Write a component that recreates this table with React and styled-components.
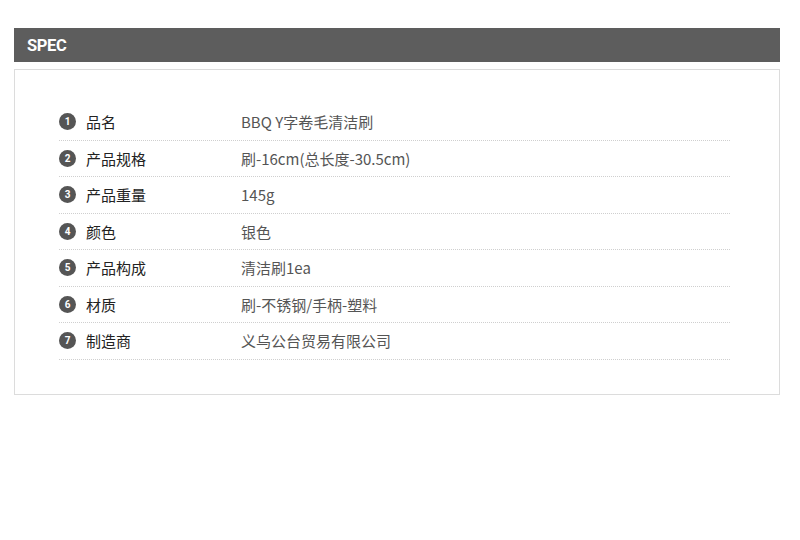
import React from "react";
import styled, { createGlobalStyle } from "styled-components";

const specs = [
    { label: "品名", value: "BBQ Y字卷毛清洁刷" },
    { label: "产品规格", value: "刷-16cm(总长度-30.5cm)" },
    { label: "产品重量", value: "145g" },
    { label: "颜色", value: "银色" },
    { label: "产品构成", value: "清洁刷1ea" },
    { label: "材质", value: "刷-不锈钢/手柄-塑料" },
    { label: "制造商", value: "义乌公台贸易有限公司" },
];

function App() {
    return (
        <>
            <GlobalStyle />
            <Page>
                <TitleBar>SPEC</TitleBar>
                <SpecBox>
                    <SpecList>
                        {specs.map((item, i) => (
                            <SpecRow key={item.label}>
                                <Num>{i + 1}</Num>
                                <Label>{item.label}</Label>
                                <Value>{item.value}</Value>
                            </SpecRow>
                        ))}
                    </SpecList>
                </SpecBox>
            </Page>
        </>
    );
}

const GlobalStyle = createGlobalStyle`
    body {
        margin: 0;
        background: #fff;
        font-family: "Noto Sans CJK SC", "Noto Sans", sans-serif;
    }
`;

const Page = styled.div`
    padding: 28px 20px 0 14px;
    width: 766px;
`;

const TitleBar = styled.div`
    height: 34px;
    background-color: #5d5d5d;
    color: #fff;
    font-family: Roboto, "Liberation Sans", sans-serif;
    font-weight: 700;
    font-size: 16.5px;
    letter-spacing: -0.4px;
    display: flex;
    align-items: center;
    padding-left: 13px;
`;

const SpecBox = styled.div`
    margin-top: 7px;
    border: 1px solid #dcdcdc;
    padding: 34px 49px 34px 44px;
`;

const SpecList = styled.ul`
    list-style: none;
    margin: 0;
    padding: 0;
`;

const SpecRow = styled.li`
    display: flex;
    align-items: center;
    height: 35.5px;
    border-bottom: 1px dotted #cfcfcf;
    font-size: 15px;
    box-sizing: content-box;
`;

const Num = styled.span`
    width: 17px;
    height: 17px;
    border-radius: 50%;
    background-color: #555;
    color: #fff;
    font-family: Roboto, sans-serif;
    font-weight: 700;
    font-size: 10px;
    display: flex;
    align-items: center;
    justify-content: center;
    margin-left: 0;
    margin-right: 10px;
    flex-shrink: 0;
`;

const Label = styled.span`
    width: 155px;
    color: #222;
`;

const Value = styled.span`
    color: #555;
`;

export default App;
